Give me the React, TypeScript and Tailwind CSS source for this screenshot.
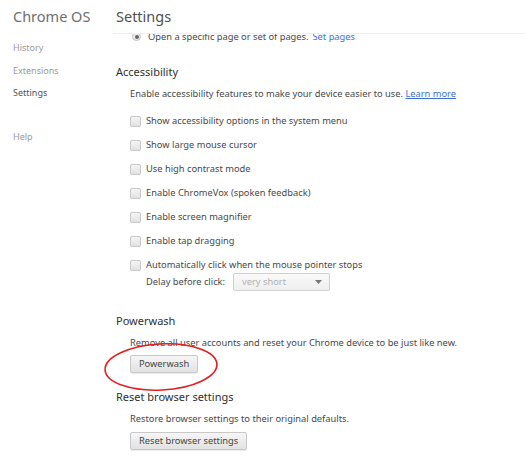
import React from "react";

const options = [
  "Show accessibility options in the system menu",
  "Show large mouse cursor",
  "Use high contrast mode",
  "Enable ChromeVox (spoken feedback)",
  "Enable screen magnifier",
  "Enable tap dragging",
];

function Checkbox() {
  return <span className="inline-block w-[11px] h-[11px] rounded-[2px] border border-[#c8c8c8] bg-gradient-to-b from-[#f4f4f4] to-[#e2e2e2] shrink-0" />;
}

function Button({ label }: { label: string }) {
  return (
    <button className="h-[18px] px-[8px] rounded-[2px] border border-[#c8c8c8] bg-gradient-to-b from-[#f6f6f6] to-[#e2e2e2] text-[9.3px] leading-none text-[#444] shadow-[0_1px_0_rgba(0,0,0,0.08)]">
      {label}
    </button>
  );
}

export default function App() {
  return (
    <div className="w-[525px] h-[460px] bg-white overflow-hidden relative font-['Noto_Sans',sans-serif] text-[9.3px] text-[#484848]">
      <div className="flex">
        {/* sidebar */}
        <div className="w-[113px] shrink-0 pl-[13px]">
          <div className="text-[14.5px] leading-[20px] text-[#6f6f6f] mt-[6px]">Chrome OS</div>
          <div className="flex flex-col text-[9px] mt-[11px]">
            <span className="text-[#9a9a9a] h-[22px] flex items-center">History</span>
            <span className="text-[#9a9a9a] h-[23px] flex items-center">Extensions</span>
            <span className="text-[#555] h-[22px] flex items-center">Settings</span>
            <span className="text-[#9a9a9a] h-[22px] flex items-center mt-[22px]">Help</span>
          </div>
        </div>

        {/* main */}
        <div className="flex-1">
          <div className="h-[34px] border-b border-[#eeeeee] pl-[3px] pt-[6px]">
            <div className="text-[14.5px] leading-[20px] text-[#505050]">Settings</div>
          </div>
          <div className="pl-[3px]">
            <div className="h-[9px] overflow-hidden pl-[16px]">
              <div className="flex items-center h-[13px] -mt-[4px]">
                <span className="w-[9px] h-[9px] rounded-full border border-[#c0c0c0] bg-[#eee] flex items-center justify-center">
                  <span className="w-[4px] h-[4px] rounded-full bg-[#666]" />
                </span>
                <span className="ml-[7px]">Open a specific page or set of pages.</span>
                <span className="text-[#3b6fd4] ml-[4px]">Set pages</span>
              </div>
            </div>

            <div className="text-[11px] text-[#303030] mt-[19px] leading-[20px]">Accessibility</div>
            <div className="pl-[14px]">
              <div className="leading-[14px] mt-[5px] whitespace-nowrap">
                Enable accessibility features to make your device easier to use.{" "}
                <span className="text-[#3b6fd4] underline">Learn more</span>
              </div>
              <div className="flex flex-col mt-[8px]">
                {options.map((o) => (
                  <div key={o} className="flex items-center gap-[5px] h-[24px]">
                    <Checkbox />
                    <span>{o}</span>
                  </div>
                ))}
                <div className="flex items-center gap-[5px] h-[24px]">
                  <Checkbox />
                  <span>Automatically click when the mouse pointer stops</span>
                </div>
                <div className="flex items-center pl-[16px] -mt-[4px]">
                  <span className="whitespace-nowrap w-[87px]">Delay before click:</span>
                  <div className="w-[97px] h-[18px] border border-[#d0d0d0] rounded-[2px] bg-gradient-to-b from-[#fafafa] to-[#efefef] flex items-center justify-between pl-[8px] pr-[7px]">
                    <span className="text-[#b0b0b0]">very short</span>
                    <svg width="7" height="4" viewBox="0 0 7 4"><path d="M0 0h7L3.5 4z" fill="#777" /></svg>
                  </div>
                </div>
              </div>
            </div>

            <div className="text-[11px] text-[#303030] mt-[20px] leading-[20px]">Powerwash</div>
            <div className="pl-[14px]">
              <div className="leading-[14px] mt-[5px] whitespace-nowrap">Remove all user accounts and reset your Chrome device to be just like new.</div>
              <div className="mt-[5px] h-[18px] flex"><Button label="Powerwash" /></div>
            </div>

            <div className="text-[11px] text-[#303030] mt-[14px] leading-[20px]">Reset browser settings</div>
            <div className="pl-[14px]">
              <div className="leading-[14px] mt-[5px] whitespace-nowrap">Restore browser settings to their original defaults.</div>
              <div className="mt-[6px] h-[18px] flex"><Button label="Reset browser settings" /></div>
            </div>
          </div>
        </div>
      </div>

      {/* annotation */}
      <svg className="absolute left-0 top-0 pointer-events-none" width="525" height="460">
        <ellipse cx="161" cy="367" rx="56" ry="23" transform="rotate(-3 161 367)" fill="none" stroke="#e02020" strokeWidth="1.6" />
      </svg>
    </div>
  );
}
